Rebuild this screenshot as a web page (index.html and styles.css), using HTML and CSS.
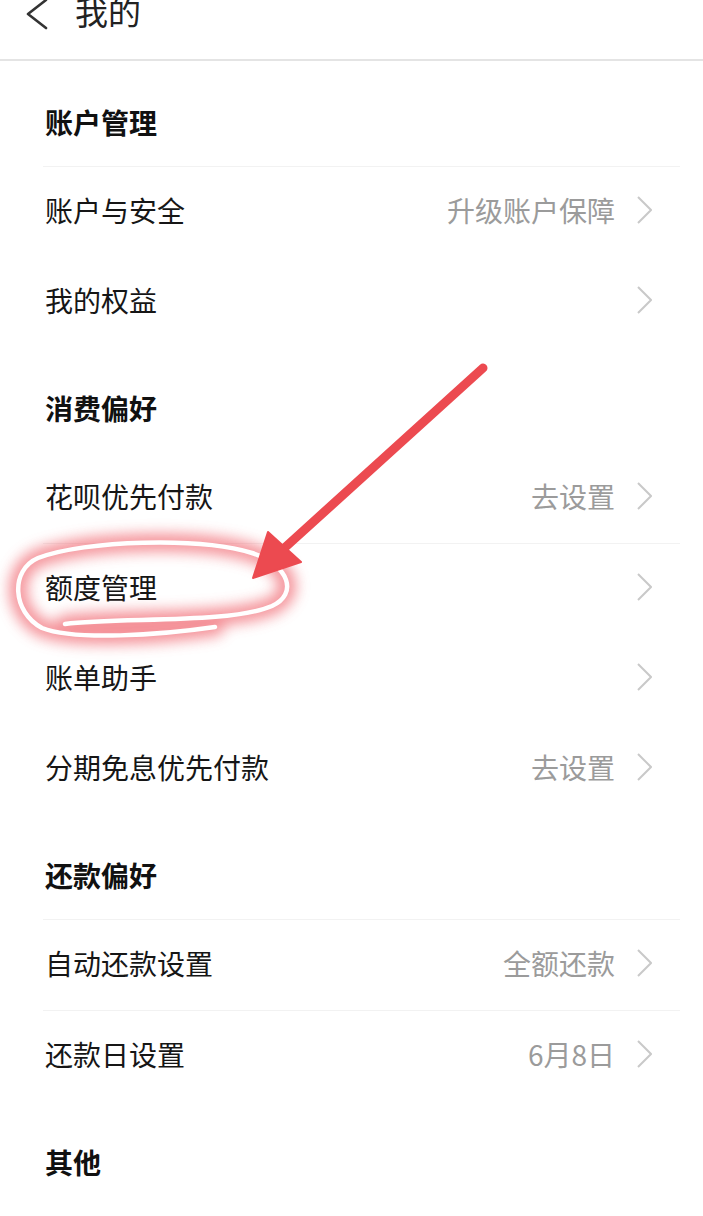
FILE: index.html
```html
<!DOCTYPE html>
<html lang="zh-CN">
<head>
<meta charset="utf-8">
<title>我的</title>
<link rel="stylesheet" href="styles.css">
</head>
<body>
<div class="page">
  <header class="topbar">
    <svg class="back" width="24" height="32" viewBox="0 0 24 32"><polyline points="20,1 2,15 20,29" fill="none" stroke="#333" stroke-width="2.6" stroke-linecap="round" stroke-linejoin="round"/></svg>
    <h1 class="title">我的</h1>
  </header>

  <main class="list">
    <div class="heading lined">账户管理</div>
    <div class="row"><span class="label">账户与安全</span><span class="value">升级账户保障</span><svg class="chev" viewBox="0 0 16 28"><polyline points="2,1 15,14 2,27" fill="none" stroke="#c9c9c9" stroke-width="2"/></svg></div>
    <div class="row"><span class="label">我的权益</span><span class="value"></span><svg class="chev" viewBox="0 0 16 28"><polyline points="2,1 15,14 2,27" fill="none" stroke="#c9c9c9" stroke-width="2"/></svg></div>

    <div class="heading">消费偏好</div>
    <div class="row lined"><span class="label">花呗优先付款</span><span class="value">去设置</span><svg class="chev" viewBox="0 0 16 28"><polyline points="2,1 15,14 2,27" fill="none" stroke="#c9c9c9" stroke-width="2"/></svg></div>
    <div class="row"><span class="label">额度管理</span><span class="value"></span><svg class="chev" viewBox="0 0 16 28"><polyline points="2,1 15,14 2,27" fill="none" stroke="#c9c9c9" stroke-width="2"/></svg></div>
    <div class="row"><span class="label">账单助手</span><span class="value"></span><svg class="chev" viewBox="0 0 16 28"><polyline points="2,1 15,14 2,27" fill="none" stroke="#c9c9c9" stroke-width="2"/></svg></div>
    <div class="row"><span class="label">分期免息优先付款</span><span class="value">去设置</span><svg class="chev" viewBox="0 0 16 28"><polyline points="2,1 15,14 2,27" fill="none" stroke="#c9c9c9" stroke-width="2"/></svg></div>

    <div class="heading lined">还款偏好</div>
    <div class="row lined"><span class="label">自动还款设置</span><span class="value">全额还款</span><svg class="chev" viewBox="0 0 16 28"><polyline points="2,1 15,14 2,27" fill="none" stroke="#c9c9c9" stroke-width="2"/></svg></div>
    <div class="row"><span class="label">还款日设置</span><span class="value">6月8日</span><svg class="chev" viewBox="0 0 16 28"><polyline points="2,1 15,14 2,27" fill="none" stroke="#c9c9c9" stroke-width="2"/></svg></div>

    <div class="heading">其他</div>
  </main>

  <svg class="annot" width="703" height="1216" viewBox="0 0 703 1216">
    <defs>
      <filter id="glow" x="-20%" y="-60%" width="140%" height="220%">
        <feGaussianBlur stdDeviation="7"/>
      </filter>
    </defs>
    <path d="M65 624 C120 617 230 624 272 606 C298 594 290 566 252 553 C200 537 85 540 38 558 C10 570 12 612 42 628 C75 641 160 635 215 627" fill="none" stroke="#f0646d" stroke-width="18" stroke-linecap="round" filter="url(#glow)" opacity="0.7"/>
    <path d="M65 624 C120 617 230 624 272 606 C298 594 290 566 252 553 C200 537 85 540 38 558 C10 570 12 612 42 628 C75 641 160 635 215 627" fill="none" stroke="#ffffff" stroke-width="4.5" stroke-linecap="round"/>
    <line x1="483" y1="368" x2="280" y2="552" stroke="#ec4a50" stroke-width="9" stroke-linecap="round"/>
    <polygon points="253,578 268,532 301,562" fill="#ec4a50" stroke="#ec4a50" stroke-width="2" stroke-linejoin="round"/>
  </svg>
</div>
</body>
</html>
```

FILE: styles.css
```css
* { box-sizing: border-box; }
html, body { margin: 0; padding: 0; background: #fff; }
body {
  font-family: "Noto Sans CJK SC", "Noto Sans", sans-serif;
  color: #161616;
  width: 703px;
  overflow: hidden;
}
.page {
  position: relative;
  width: 703px;
  height: 1216px;
  overflow: hidden;
}
.topbar {
  height: 61px;
  border-bottom: 2px solid #e4e4e4;
  display: flex;
  align-items: flex-start;
  padding-left: 26px;
}
.back {
  display: block;
  margin-top: -1px;
  width: 24px;
  height: 32px;
}
.title {
  margin: -9px 0 0 25px;
  font-size: 33px;
  line-height: 40px;
  font-weight: 400;
  color: #222;
}
.list {
  margin: 0 23px 0 43px;
}
.heading {
  height: 106px;
  padding-top: 43px;
  padding-left: 2px;
  font-size: 28px;
  line-height: 36px;
  font-weight: 700;
  color: #111;
  border-bottom: 1px solid transparent;
}
.heading.lined, .row.lined { border-bottom-color: #f2f2f2; }
.row {
  height: 90px;
  display: flex;
  align-items: center;
  padding-bottom: 4px;
  font-size: 28px;
  border-bottom: 1px solid transparent;
}
.row:not(.lined) { height: 90px; border-bottom: 0; }
.row.lined { height: 91px; }
.label { flex: 1; padding-left: 2px; color: #161616; }
.value { color: #9b9b9b; }
.chev {
  width: 16px;
  height: 28px;
  margin-left: 21px;
  margin-right: 28px;
  display: block;
}
.annot {
  position: absolute;
  left: 0;
  top: 0;
  pointer-events: none;
}
```
